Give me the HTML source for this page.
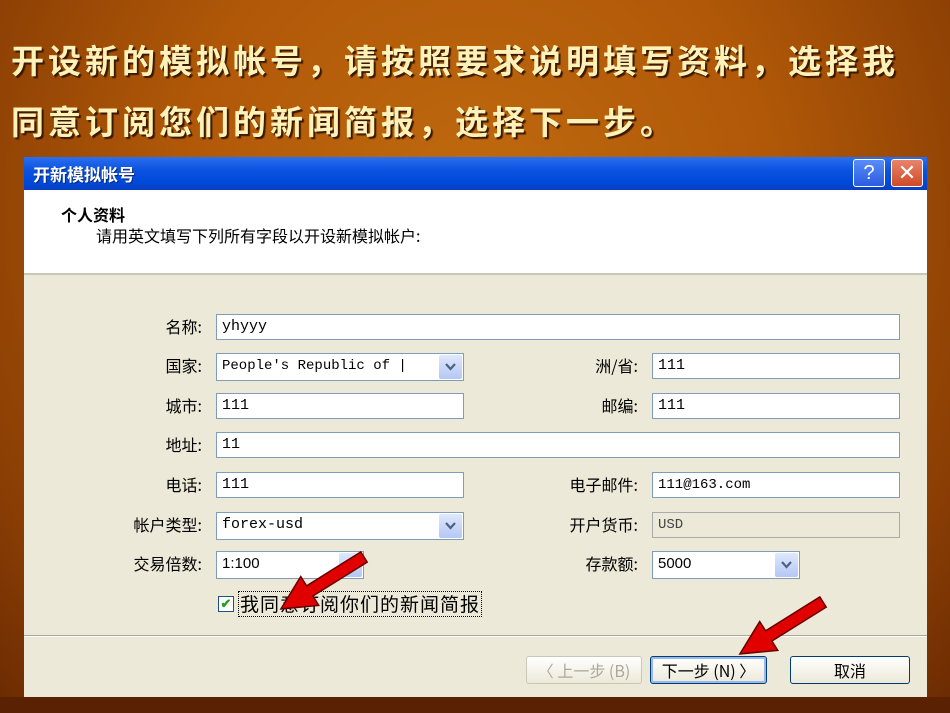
<!DOCTYPE html>
<html><head><meta charset="utf-8"><style>
*{margin:0;padding:0;box-sizing:border-box}
body{width:950px;height:713px;overflow:hidden;position:relative;font-family:"Liberation Sans","Noto Sans CJK SC",sans-serif;
background:radial-gradient(ellipse at 50% 30%,#c06a10 0%,#b05808 45%,#8a3e04 80%,#6a2a02 100%)}
.t{position:absolute;left:11px;font-size:33px;font-weight:bold;color:#fff2b8;text-shadow:2px 2px 1px #3a1800;letter-spacing:4px;font-family:"Noto Sans CJK SC",sans-serif;white-space:nowrap}
.bottom{position:absolute;left:0;top:697px;width:950px;height:16px;background:#5a2202}
.dlg{position:absolute;left:24px;top:157px;width:903px;height:540px;background:#ece9d8}
.title{position:absolute;left:0;top:0;width:903px;height:33px;background:linear-gradient(#2a6ff0,#0a52e0 40%,#0048d8 80%,#0a3ec0)}
.title span{position:absolute;left:9px;top:4px;color:#fff;font-weight:bold;font-size:17px;text-shadow:1px 1px 0 #0a2a80;font-family:"Noto Sans CJK SC",sans-serif}
.hb{position:absolute;top:2px;width:32px;height:28px;border:1px solid #fff;border-radius:3px}
.hdr{position:absolute;left:0;top:33px;width:903px;height:85px;background:#fff;border-bottom:2px solid #cbc7b8}
.lbl{position:absolute;font-size:16px;color:#000;text-align:right;font-family:"Noto Sans CJK SC",sans-serif;white-space:nowrap}
.in{position:absolute;height:26px;background:#fff;border:1px solid #7f9db9;font-family:"Liberation Mono",monospace;font-size:15px;padding-left:5px;line-height:24px}
.dd{position:absolute;right:1px;top:1px;width:23px;height:24px;background:linear-gradient(#dfe8fc,#b4c8f4);border-radius:2px}
.dd svg{position:absolute;left:6px;top:8px}
.btn{position:absolute;top:499px;height:28px;border:1px solid #003c74;border-radius:3px;background:linear-gradient(#fff,#ece9d8);font-size:16px;text-align:center;line-height:26px;font-family:"Noto Sans CJK SC",sans-serif}
</style></head><body>
<div class="t" style="top:35px">开设新的模拟帐号，请按照要求说明填写资料，选择我</div>
<div class="t" style="top:96px">同意订阅您们的新闻简报，选择下一步。</div>
<div class="dlg">
 <div class="title"><span>开新模拟帐号</span>
  <div class="hb" style="left:829px;background:linear-gradient(#5a8cf8,#2a5ce0);color:#fff;font-size:20px;text-align:center;line-height:26px">?</div>
  <div class="hb" style="left:867px;background:linear-gradient(#e8846a,#d04a28);color:#fff;font-size:22px;text-align:center;line-height:26px">✕</div>
 </div>
 <div class="hdr">
  <div style="position:absolute;left:37px;top:12px;font-weight:bold;font-size:16px;font-family:'Noto Sans CJK SC',sans-serif">个人资料</div>
  <div style="position:absolute;left:72px;top:33px;font-size:16px;font-family:'Noto Sans CJK SC',sans-serif">请用英文填写下列所有字段以开设新模拟帐户:</div>
 </div>
 <div class="lbl" style="right:725px;top:157px">名称:</div>
 <div class="in" style="left:192px;top:157px;width:684px">yhyyy</div>
 <div class="lbl" style="right:725px;top:196px">国家:</div>
 <div class="in" style="left:192px;top:196px;width:248px;height:28px;font-size:14px">People's Republic of |<div class="dd"><svg width="11" height="8"><path d="M1 1 L5.5 6 L10 1" stroke="#4d6185" stroke-width="2.2" fill="none"/></svg></div></div>
 <div class="lbl" style="right:289px;top:196px">洲/省:</div>
 <div class="in" style="left:628px;top:196px;width:248px">111</div>
 <div class="lbl" style="right:725px;top:236px">城市:</div>
 <div class="in" style="left:192px;top:236px;width:248px">111</div>
 <div class="lbl" style="right:289px;top:236px">邮编:</div>
 <div class="in" style="left:628px;top:236px;width:248px">111</div>
 <div class="lbl" style="right:725px;top:275px">地址:</div>
 <div class="in" style="left:192px;top:275px;width:684px">11</div>
 <div class="lbl" style="right:725px;top:315px">电话:</div>
 <div class="in" style="left:192px;top:315px;width:248px">111</div>
 <div class="lbl" style="right:289px;top:315px">电子邮件:</div>
 <div class="in" style="left:628px;top:315px;width:248px;font-size:14px">111@163.com</div>
 <div class="lbl" style="right:725px;top:355px">帐户类型:</div>
 <div class="in" style="left:192px;top:355px;width:248px;height:28px">forex-usd<div class="dd"><svg width="11" height="8"><path d="M1 1 L5.5 6 L10 1" stroke="#4d6185" stroke-width="2.2" fill="none"/></svg></div></div>
 <div class="lbl" style="right:289px;top:355px">开户货币:</div>
 <div class="in" style="left:628px;top:355px;width:248px;background:#ece9d8;border-color:#aaa;color:#444;font-size:14px">USD</div>
 <div class="lbl" style="right:725px;top:394px">交易倍数:</div>
 <div class="in" style="left:192px;top:394px;width:148px;height:28px;font-family:'Liberation Sans',sans-serif">1:100<div class="dd"><svg width="11" height="8"><path d="M1 1 L5.5 6 L10 1" stroke="#4d6185" stroke-width="2.2" fill="none"/></svg></div></div>
 <div class="lbl" style="right:289px;top:394px">存款额:</div>
 <div class="in" style="left:628px;top:394px;width:148px;height:28px;font-family:'Liberation Sans',sans-serif">5000<div class="dd"><svg width="11" height="8"><path d="M1 1 L5.5 6 L10 1" stroke="#4d6185" stroke-width="2.2" fill="none"/></svg></div></div>
 <div style="position:absolute;left:194px;top:439px;width:16px;height:16px;border:1px solid #1c5180;background:#fff;color:#21a121;font-size:13px;line-height:14px;text-align:center;font-weight:bold">✔</div>
 <div style="position:absolute;left:214px;top:434px;font-size:19px;line-height:24px;border:1px dotted #000;padding:0 1px;font-family:'Noto Sans CJK SC',sans-serif;letter-spacing:1px">我同意订阅你们的新闻简报</div>
 <div style="position:absolute;left:0;top:478px;width:903px;height:2px;border-top:1px solid #aca899;border-bottom:1px solid #fff"></div>
 <div class="btn" style="left:502px;width:116px;color:#aca899;border-color:#c9c7ba">〈 上一步 (B)</div>
 <div class="btn" style="left:626px;width:117px;border-color:#003c74;box-shadow:inset 0 0 0 2px #9ab8ec">下一步 (N) 〉</div>
 <div class="btn" style="left:766px;width:120px">取消</div>
</div>
<div class="bottom"></div>
<svg width="950" height="713" style="position:absolute;left:0;top:0">
 <g transform="translate(364,557) rotate(148)"><polygon points="0,-6 64,-6 64,-17 98,0 64,17 64,6 0,6" fill="#e00000" stroke="#600" stroke-width="1.5"/></g>
 <g transform="translate(823,602) rotate(148)"><polygon points="0,-6 64,-6 64,-17 98,0 64,17 64,6 0,6" fill="#e00000" stroke="#600" stroke-width="1.5"/></g>
</svg>
</body></html>
